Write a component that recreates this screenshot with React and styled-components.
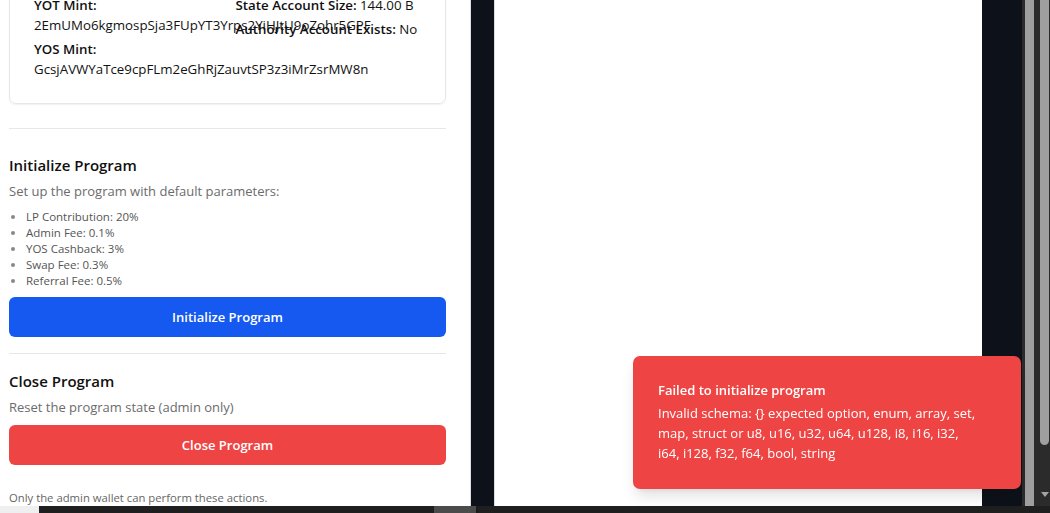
import React, { useLayoutEffect, useRef } from 'react'
import styled, { createGlobalStyle } from 'styled-components'

const GlobalStyle = createGlobalStyle`
  html, body {
    margin: 0;
    padding: 0;
    height: 100%;
    overflow: hidden;
    background: #0d1119;
  }
  body {
    font-family: "Open Sans", "Noto Sans", sans-serif;
    color: #111;
  }
  * { box-sizing: border-box; }
`

const Screen = styled.div`
  width: 1050px;
  height: 513px;
  display: flex;
  flex-direction: column;
`

const Main = styled.div`
  flex: 1;
  display: flex;
  min-height: 0;
`

const AdminPanel = styled.div`
  width: 470px;
  flex-shrink: 0;
  background: #fff;
  overflow: hidden;
`

const Scroller = styled.div`
  height: 100%;
  overflow: hidden;
  padding: 16px 24px 10px 9px;
`

const Gutter = styled.div`
  width: ${p => p.$w}px;
  flex-shrink: 0;
  background: #0d1119;
  border-left: 1px solid ${p => p.$edge ? '#d9dce1' : '#0d1119'};
  border-right: 1px solid ${p => p.$edge ? '#d9dce1' : '#0d1119'};
`

const Preview = styled.div`
  width: 487px;
  flex-shrink: 0;
  background: #fff;
`

const Tracks = styled.div`
  width: 28px;
  flex-shrink: 0;
  background: #2b2b2b;
  display: flex;
  gap: 6px;
  padding-left: 3px;
`

const Track = styled.div`
  width: 9px;
  position: relative;
`

const Thumb = styled.div`
  width: 9px;
  height: ${p => p.$h};
  background: #9f9f9f;
  border-radius: ${p => p.$round ? '0 0 5px 5px' : '0'};
`

const Arrow = styled.div`
  position: absolute;
  left: 1px;
  bottom: 9px;
  width: 0;
  height: 0;
  border-left: 4px solid transparent;
  border-right: 4px solid transparent;
  border-top: 5px solid #a3a3a3;
`

const HBar = styled.div`
  height: 7px;
  background: #1f1f1f;
  display: flex;
`

const HCorner = styled.div`
  width: 39px;
  background: #efefef;
`

const HThumb = styled.div`
  width: 44px;
  margin-left: 395px;
  background: #4b4b4b;
  border-right: 2px solid #1a1a1a;
`

const PageTitle = styled.h1`
  font-size: 22px;
  font-weight: 700;
  margin: 0 0 16px;
`

const Card = styled.div`
  border: 1px solid #e5e7eb;
  border-radius: 7px;
  padding: 24px;
  box-shadow: 0 1px 2px rgba(0, 0, 0, 0.06);
`

const CardTitle = styled.h2`
  font-size: 17px;
  font-weight: 600;
  margin: 0 0 16px;
  line-height: 28px;
`

const InfoGrid = styled.div`
  display: grid;
  grid-template-columns: repeat(2, minmax(0, 1fr));
  column-gap: 16px;
`

const InfoColumn = styled.div`
  display: flex;
  flex-direction: column;
  gap: 4px;
  min-width: 0;
`

const InfoItem = styled.div`
  font-size: 13.3px;
  line-height: 20px;
  white-space: nowrap;

  b {
    font-weight: 600;
  }
`

const Value = styled.div`
  font-size: 13.3px;
  line-height: 20px;
  white-space: nowrap;
`

const Section = styled.section`
  border-top: 1px solid #e5e7eb;
  margin-top: ${p => p.$mt}px;
  padding-top: ${p => p.$pt}px;
`

const SectionTitle = styled.h3`
  font-size: 15px;
  font-weight: 600;
  line-height: 24px;
  margin: 0 0 4px;
`

const SectionText = styled.p`
  font-size: 13px;
  line-height: 20px;
  color: #6b6b6b;
  margin: 0 0 8px;
`

const ParamList = styled.ul`
  margin: 0 0 8px;
  padding-left: 17px;
  font-size: 11.5px;
  line-height: 16px;
  color: #555;

  li::marker {
    color: #888;
  }
`

const ActionButton = styled.button`
  display: block;
  width: 100%;
  height: 40px;
  border: none;
  border-radius: 6px;
  background: ${p => p.$danger ? '#ef4444' : '#1559f0'};
  color: #fff;
  font-family: inherit;
  font-size: 13px;
  font-weight: 600;
  cursor: pointer;
`

const Note = styled.p`
  font-size: 11.3px;
  line-height: 16px;
  color: #666;
  margin: 25px 0 0;
`

const Toast = styled.div`
  position: fixed;
  right: 29px;
  bottom: 24px;
  width: 388px;
  padding: 24px 24px 26px 25px;
  background: #ef4444;
  color: #fff;
  border-radius: 7px;
  box-shadow: 0 10px 15px -3px rgba(0, 0, 0, 0.12), 0 4px 6px -4px rgba(0, 0, 0, 0.1);
`

const ToastTitle = styled.div`
  font-size: 13px;
  font-weight: 600;
  line-height: 20px;
  margin-bottom: 3px;
`

const ToastBody = styled.div`
  font-size: 13px;
  line-height: 20px;
`

const params = [
  'LP Contribution: 20%',
  'Admin Fee: 0.1%',
  'YOS Cashback: 3%',
  'Swap Fee: 0.3%',
  'Referral Fee: 0.5%',
]

export default function App() {
  const scrollRef = useRef(null)
  const gridRef = useRef(null)

  useLayoutEffect(() => {
    const s = scrollRef.current
    const g = gridRef.current
    if (!s || !g) return
    const offset = g.getBoundingClientRect().top - s.getBoundingClientRect().top
    s.scrollTop = offset + 5
  }, [])

  return (
    <Screen>
      <GlobalStyle />
      <Main>
        <AdminPanel>
          <Scroller ref={scrollRef}>
            <PageTitle>Admin Controls</PageTitle>
            <Card>
              <CardTitle>Program State</CardTitle>
              <InfoGrid ref={gridRef}>
                <InfoColumn>
                  <div>
                    <InfoItem><b>YOT Mint:</b></InfoItem>
                    <Value>2EmUMo6kgmospSja3FUpYT3Yrps2YiHJtU9oZohr5GPF</Value>
                  </div>
                  <div>
                    <InfoItem><b>YOS Mint:</b></InfoItem>
                    <Value>GcsjAVWYaTce9cpFLm2eGhRjZauvtSP3z3iMrZsrMW8n</Value>
                  </div>
                </InfoColumn>
                <InfoColumn>
                  <InfoItem><b>State Account Size:</b> 144.00 B</InfoItem>
                  <InfoItem><b>Authority Account Exists:</b> No</InfoItem>
                </InfoColumn>
              </InfoGrid>
            </Card>

            <Section $mt={24} $pt={24}>
              <SectionTitle>Initialize Program</SectionTitle>
              <SectionText>Set up the program with default parameters:</SectionText>
              <ParamList>
                {params.map(p => <li key={p}>{p}</li>)}
              </ParamList>
              <ActionButton>Initialize Program</ActionButton>
            </Section>

            <Section $mt={16} $pt={15}>
              <SectionTitle>Close Program</SectionTitle>
              <SectionText>Reset the program state (admin only)</SectionText>
              <ActionButton $danger>Close Program</ActionButton>
            </Section>

            <Note>Only the admin wallet can perform these actions.</Note>
          </Scroller>
        </AdminPanel>
        <Gutter $w={25} $edge />
        <Preview />
        <Gutter $w={40} />
        <Tracks>
          <Track>
            <Thumb $h="100%" />
          </Track>
          <Track>
            <Thumb $h="445px" $round />
            <Arrow />
          </Track>
        </Tracks>
      </Main>
      <HBar>
        <HCorner />
        <HThumb />
      </HBar>

      <Toast>
        <ToastTitle>Failed to initialize program</ToastTitle>
        <ToastBody>
          Invalid schema: {'{}'} expected option, enum, array, set,<br />
          map, struct or u8, u16, u32, u64, u128, i8, i16, i32,<br />
          i64, i128, f32, f64, bool, string
        </ToastBody>
      </Toast>
    </Screen>
  )
}
